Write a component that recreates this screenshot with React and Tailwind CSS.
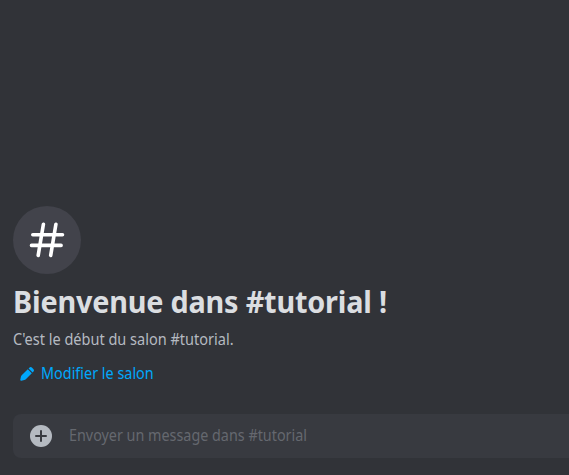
function HashIcon() {
  return (
    <svg viewBox="0 0 68 68" className="size-[68px]" fill="none" stroke="#fff" strokeWidth="3.6" strokeLinecap="round">
      <path d="M30.4 18.2 25.2 49.4M42.9 18.2 37.7 49.4M19.8 28.7H49.5M18.5 39.4H48.1" />
    </svg>
  );
}

function PencilIcon() {
  return (
    <svg viewBox="0 0 14 14" className="h-3.5 w-3.5 shrink-0" fill="#00a8fc">
      <path d="M9.3.7a2 2 0 0 1 2.8 0l1.2 1.2a2 2 0 0 1 0 2.8l-.7.7L8.6 1.4zM7.8 2.2l4 4-6 6c-.4.4-.9.7-1.5.8l-2.9.8c-.7.2-1.3-.4-1.1-1.1l.6-3c.1-.6.4-1.1.8-1.5z" />
    </svg>
  );
}

function PlusIcon() {
  return (
    <svg viewBox="0 0 22 22" className="size-[22px] shrink-0">
      <circle cx="11" cy="11" r="11" fill="#b5bac1" />
      <path d="M11 6v10M6 11h10" stroke="#383a40" strokeWidth="2" strokeLinecap="round" />
    </svg>
  );
}

export default function App() {
  return (
    <main className="flex h-[475px] w-full flex-col justify-end overflow-hidden bg-[#313338] pl-[13px] font-['Noto_Sans',sans-serif] whitespace-nowrap">
      <div className="size-[68px] rounded-full bg-[#42434b]">
        <HashIcon />
      </div>
      <h1 className="mt-2 h-10 origin-left scale-x-[0.96] text-[30px] leading-[39px] font-bold tracking-[-0.2px] text-[#dbdee1]">Bienvenue dans #tutorial !</h1>
      <p className="mt-2 h-5 origin-left scale-x-[0.907] text-base leading-[18px] text-[#b5bac1]">C'est le début du salon #tutorial.</p>
      <button className="mt-2 flex h-8 items-center gap-[7px] self-start pl-[7px] text-[#00a8fc]">
        <PencilIcon />
        <span className="-mt-0.5 origin-left scale-x-90 text-base leading-5">Modifier le salon</span>
      </button>
      <div className="mt-6 mb-[17px] flex h-11 items-center gap-[17px] rounded-l-lg bg-[#383a40] pl-[17px]">
        <PlusIcon />
        <span className="-mt-0.5 origin-left scale-x-[0.897] text-base leading-5 text-[#65686f]">Envoyer un message dans #tutorial</span>
      </div>
    </main>
  );
}
